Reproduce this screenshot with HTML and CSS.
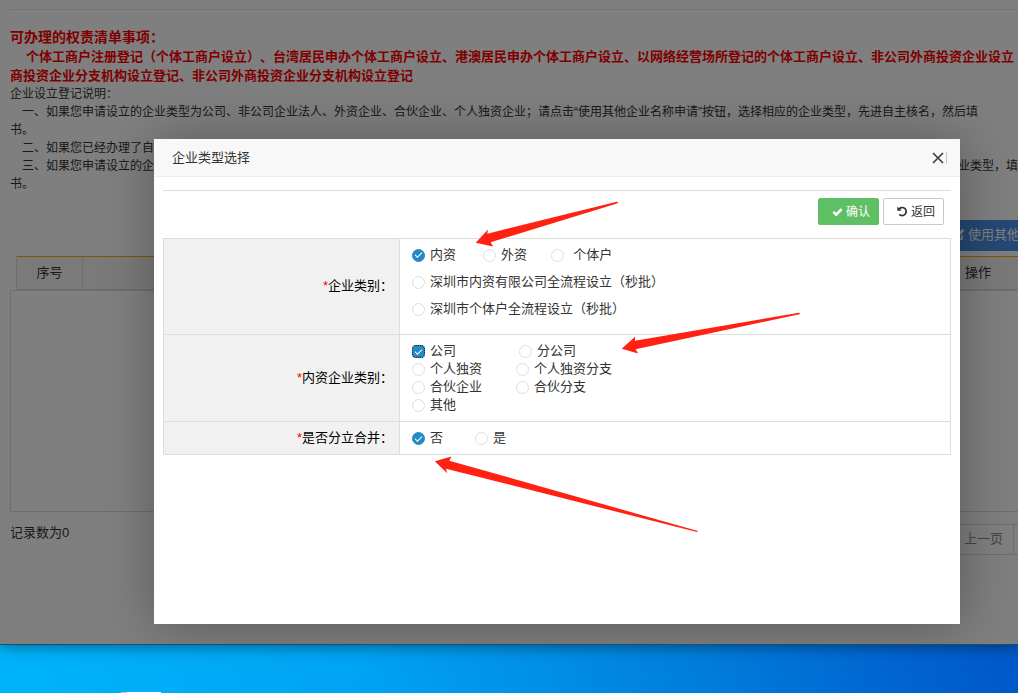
FILE: index.html
```html
<!DOCTYPE html>
<html lang="zh-CN">
<head>
<meta charset="utf-8">
<title>企业类型选择</title>
<link rel="stylesheet" href="styles.css">
</head>
<body>
<div class="window">
  <main class="page">
    <hr class="rule">
    <section class="notice">
      <h1 class="notice-title">可办理的权责清单事项：</h1>
      <p class="notice-line first">个体工商户注册登记（个体工商户设立）、台湾居民申办个体工商户设立、港澳居民申办个体工商户设立、以网络经营场所登记的个体工商户设立、非公司外商投资企业设立</p>
      <p class="notice-line">商投资企业分支机构设立登记、非公司外商投资企业分支机构设立登记</p>
    </section>
    <section class="guide">
      <p>企业设立登记说明：</p>
      <p class="indent">一、如果您申请设立的企业类型为公司、非公司企业法人、外资企业、合伙企业、个人独资企业；请点击“使用其他企业名称申请”按钮，选择相应的企业类型，先进自主核名，然后填</p>
      <p>书。</p>
      <p class="indent">二、如果您已经办理了自</p>
      <p class="indent split"><span>三、如果您申请设立的企</span><span class="tail">业类型，填</span></p>
      <p>书。</p>
    </section>
    <div class="toolbar">
      <button class="other-btn" type="button">
        <svg width="13" height="13" viewBox="0 0 13 13"><path d="M10 7v4H1.500V2.500H7" fill="none" stroke="#fff" stroke-width="1.500"/><path d="M4 9l.5-2.500L10.500.800l2 2L6.500 8.500z" fill="#fff"/></svg>
        <span>使用其他</span>
      </button>
    </div>
    <div class="list-head">
      <div class="cell number">序号</div>
      <div class="cell filler"></div>
      <div class="cell action">操作</div>
    </div>
    <div class="list-body"></div>
    <div class="list-foot">
      <span class="count">记录数为0</span>
      <div class="pager"><button type="button" class="prev">上一页</button></div>
    </div>
  </main>

  <div class="mask">
    <section class="dialog" role="dialog" aria-labelledby="dialog-title">
      <header class="dialog-head">
        <h2 id="dialog-title">企业类型选择</h2>
        <button class="close" type="button" aria-label="关闭">
          <svg width="12" height="12" viewBox="0 0 12 12"><path d="M1 1l10 10M11 1L1 11" stroke="#3c3f46" stroke-width="1.700" fill="none"/></svg>
        </button>
      </header>
      <div class="dialog-body">
        <hr class="rule">
        <div class="actions">
          <button class="btn confirm" type="button">
            <svg width="11" height="10" viewBox="0 0 12 10"><path d="M1.500 4.800l3 3L10.500 1.800" stroke="#fff" stroke-width="2.800" fill="none"/></svg>
            <span>确认</span>
          </button>
          <button class="btn back" type="button">
            <svg width="11" height="11" viewBox="0 0 11 11"><path d="M2 3.100A4 4 0 1 1 2.300 8.300" stroke="#333" stroke-width="1.700" fill="none"/><path d="M.300.500v4.300h4.300z" fill="#333"/></svg>
            <span>返回</span>
          </button>
        </div>
        <table class="form">
          <tr>
            <th scope="row"><i>*</i>企业类别：</th>
            <td>
              <div class="line"><label class="opt home"><input type="radio" name="kind" checked><span>内资</span></label><label class="opt foreign"><input type="radio" name="kind"><span>外资</span></label><label class="opt self"><input type="radio" name="kind"><span>个体户</span></label></div>
              <div class="line"><label class="opt"><input type="radio" name="kind"><span>深圳市内资有限公司全流程设立（秒批）</span></label></div>
              <div class="line"><label class="opt"><input type="radio" name="kind"><span>深圳市个体户全流程设立（秒批）</span></label></div>
            </td>
          </tr>
          <tr>
            <th scope="row"><i>*</i>内资企业类别：</th>
            <td>
              <div class="pairs">
                <label class="opt"><input class="focused" type="radio" name="type" checked><span>公司</span></label><label class="opt inset"><input type="radio" name="type"><span>分公司</span></label>
                <label class="opt"><input type="radio" name="type"><span>个人独资</span></label><label class="opt"><input type="radio" name="type"><span>个人独资分支</span></label>
                <label class="opt"><input type="radio" name="type"><span>合伙企业</span></label><label class="opt"><input type="radio" name="type"><span>合伙分支</span></label>
                <label class="opt"><input type="radio" name="type"><span>其他</span></label>
              </div>
            </td>
          </tr>
          <tr>
            <th scope="row"><i>*</i>是否分立合并：</th>
            <td>
              <div class="answers"><label class="opt"><input type="radio" name="merge" checked><span>否</span></label><label class="opt"><input type="radio" name="merge"><span>是</span></label></div>
            </td>
          </tr>
        </table>
      </div>
    </section>
  </div>
</div>
<footer class="desktop"><div class="tab"></div></footer>
<svg class="arrows" aria-hidden="true">
  <path d="M475.700 242.700L488 229.500 487.300 233.700 616.700 201.700 618.300 202.300 617 203.500 490.700 242.300 493 246.500z"/>
  <path d="M621.700 348.700L635 336.800V340.700L799 312.700 800 313.300 799.500 314.200 635.700 349.300 638 353.500z"/>
  <path d="M434.800 461.300L451.500 456.600 449.300 460.700 697.800 531 697 532 446 468.700 447.200 473.300z"/>
</svg>
</body>
</html>
```

FILE: styles.css
```css
* { box-sizing: border-box; }

body {
  margin: 0;
  min-height: 100vh;
  display: flex;
  flex-direction: column;
  position: relative;
  overflow: hidden;
  background: #fff;
  color: #333;
  font: 13px/18px "Liberation Sans", "Noto Sans CJK SC", sans-serif;
  text-spacing-trim: space-all;
}

h1, h2, p { margin: 0; }

button {
  font: inherit;
  cursor: pointer;
}

.rule {
  height: 1px;
  margin: 0;
  border: 0;
  background: #ddd;
}

.window {
  position: relative;
  z-index: 1;
  flex: 1;
  display: flex;
  flex-direction: column;
  border-bottom: 1px solid #1b4f6b;
  box-shadow: 0 0 16px rgba(0, 0, 0, .5);
  background: #fff;
}

.page {
  flex: 1;
  display: flex;
  flex-direction: column;
  padding: 9px 0 0 10px;
  overflow: hidden;
  white-space: nowrap;
}

.page .rule { background: #e6e6e6; }

.notice {
  padding-top: 17px;
  color: #f00;
  font-weight: 700;
}

.notice-title {
  font-size: 14px;
  line-height: 20px;
}

.notice-line { line-height: 19px; }
.first { padding-left: 16px; }

.guide { font-size: 12px; }
.indent { padding-left: 12px; }

.split {
  display: flex;
  justify-content: space-between;
}

.toolbar {
  display: flex;
  justify-content: flex-end;
  padding-top: 27px;
}

.other-btn {
  display: flex;
  align-items: center;
  gap: 3px;
  width: 78px;
  height: 31px;
  padding: 0 0 2px 12px;
  border: 0;
  background: #4a90e8;
  color: #fff;
}

.other-btn svg { flex: none; }

.list-head {
  display: flex;
  height: 34px;
  margin: 5px 0 0 6px;
  border-left: 1px solid #ddd;
  background: #f5f5f5;
}

.cell {
  border-top: 1px solid #ffa800;
  border-bottom: 1px solid #ddd;
  line-height: 32px;
  text-align: center;
}

.number {
  width: 66px;
  border-right: 1px solid #ddd;
}

.filler { flex: 1; }
.action { width: 80px; }

.list-body {
  flex: 1;
  border: 1px solid #ddd;
  border-right: 0;
}

.list-foot {
  display: flex;
  justify-content: space-between;
  padding: 12px 0 89px;
}

.pager {
  display: flex;
  height: 31px;
  border: 1px solid #ddd;
  border-right: 0;
  padding-right: 4px;
}

.prev {
  padding: 0 10px 2px;
  border: 0;
  border-right: 1px solid #ddd;
  background: none;
  color: #888;
}

.mask {
  position: absolute;
  inset: 0;
  display: flex;
  padding: 139px 58px 20px 154px;
  overflow: hidden;
  background: rgba(0, 0, 0, .5);
}

.dialog {
  flex: 1;
  background: #fff;
  box-shadow: 1px 1px 50px rgba(0, 0, 0, .3);
}

.dialog-head {
  display: flex;
  align-items: center;
  justify-content: space-between;
  height: 38px;
  padding: 0 13px 0 18px;
  border-bottom: 1px solid #eee;
  background: #f8f8f8;
}

.dialog-head h2 {
  font-size: 13px;
  font-weight: 400;
}

.close {
  display: flex;
  padding: 0 2px 0 0;
  border: 0;
  border-right: 1px solid #a6d3f5;
  background: none;
}

.dialog-body { padding: 13px 9px 0; }

.actions {
  display: flex;
  justify-content: flex-end;
  gap: 4px;
  padding: 7px 7px 13px;
}

.btn {
  display: flex;
  align-items: center;
  gap: 3px;
  height: 27px;
  padding: 0 8px 0 13px;
  border: 1px solid #5fbf64;
  border-radius: 2px;
  font-size: 12px;
}

.btn svg { flex: none; }

.confirm {
  background: #5fbf64;
  color: #fff;
}

.back {
  border-color: #c9c9c9;
  background: #fff;
  color: #333;
}

.form {
  width: 100%;
  border-collapse: collapse;
}

.form th, .form td { border: 1px solid #ddd; }

.form th {
  width: 30%;
  padding: 0 6px 1px 0;
  background: #f1f1f1;
  color: #000;
  font-weight: 400;
  text-align: right;
}

.form i {
  color: #f00;
  font-style: normal;
}

.form td { padding: 7px 12px; }

.line {
  display: flex;
  align-items: center;
  height: 27px;
}

.form tr:first-child td { padding: 2px 12px 12px; }

.opt {
  display: flex;
  align-items: center;
  gap: 5px;
  line-height: 18px;
  white-space: nowrap;
}

.home { margin-right: 27px; }
.foreign { margin-right: 24px; }
.self { gap: 9px; }

.opt input {
  appearance: none;
  flex: none;
  width: 13px;
  height: 13px;
  margin: 1px 0 0;
  border: 1px solid #dfdfda;
  border-radius: 50%;
  background: #fff;
}

.opt input:checked {
  display: grid;
  place-items: center;
  border-color: #2489c5;
  background: #2489c5;
}

.opt input:checked::before {
  content: "";
  width: 6px;
  height: 3px;
  margin-bottom: 2px;
  border: solid #fff;
  border-width: 0 0 1px 1px;
  transform: rotate(-45deg);
}

.opt .focused {
  border-radius: 4px;
  outline: 1px dotted #123;
  outline-offset: -1px;
}

.pairs {
  display: grid;
  grid-template-columns: 104px 1fr;
}

.inset { padding-left: 3px; }

.answers {
  display: flex;
  gap: 32px;
}

.desktop {
  display: flex;
  align-items: flex-end;
  height: 48px;
  padding-left: 121px;
  background: linear-gradient(100deg, #00b4fa 0%, #00a4f4 35%, #007cdb 70%, #0064d2 88%, #0058c8 100%);
}

.tab {
  width: 40px;
  height: 1px;
  background: linear-gradient(90deg, #f5b5ac 6px, #fff 6px);
}

.arrows {
  position: absolute;
  z-index: 2;
  inset: 0;
  width: 100%;
  height: 100%;
  fill: #ff2213;
  pointer-events: none;
}
```
